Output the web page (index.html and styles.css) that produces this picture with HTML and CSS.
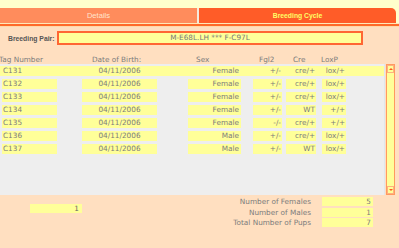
FILE: index.html
```html
<!DOCTYPE html>
<html>
<head>
<meta charset="utf-8">
<link rel="stylesheet" href="styles.css">
</head>
<body>
<div class="top"></div>
<div class="tabs">
  <div class="tab tab-details">Details</div>
  <div class="tab-gap"></div>
  <div class="tab tab-cycle">Breeding Cycle</div>
</div>
<div class="rule"></div>
<div class="panel">
  <div class="pair">
    <span class="pair-label">Breeding Pair:</span>
    <div class="pair-box">M-E68L.LH *** F-C97L</div>
  </div>
  <div class="head">
    <span class="h-tag">Tag Number</span>
    <span class="h-date">Date of Birth:</span>
    <span class="h-sex">Sex</span>
    <span class="h-fgl">Fgl2</span>
    <span class="h-cre">Cre</span>
    <span class="h-lox">LoxP</span>
  </div>
  <div class="listwrap">
    <div class="list">
      <div class="row selected"><span class="c c-tag">C131</span><span class="c c-date">04/11/2006</span><span class="c c-sex">Female</span><span class="c c-fgl">+/-</span><span class="c c-cre">cre/+</span><span class="c c-lox">lox/+</span></div>
      <div class="row"><span class="c c-tag">C132</span><span class="c c-date">04/11/2006</span><span class="c c-sex">Female</span><span class="c c-fgl">+/-</span><span class="c c-cre">cre/+</span><span class="c c-lox">lox/+</span></div>
      <div class="row"><span class="c c-tag">C133</span><span class="c c-date">04/11/2006</span><span class="c c-sex">Female</span><span class="c c-fgl">+/-</span><span class="c c-cre">cre/+</span><span class="c c-lox">lox/+</span></div>
      <div class="row"><span class="c c-tag">C134</span><span class="c c-date">04/11/2006</span><span class="c c-sex">Female</span><span class="c c-fgl">+/-</span><span class="c c-cre">WT</span><span class="c c-lox">+/+</span></div>
      <div class="row"><span class="c c-tag">C135</span><span class="c c-date">04/11/2006</span><span class="c c-sex">Female</span><span class="c c-fgl">-/-</span><span class="c c-cre">cre/+</span><span class="c c-lox">+/+</span></div>
      <div class="row"><span class="c c-tag">C136</span><span class="c c-date">04/11/2006</span><span class="c c-sex">Male</span><span class="c c-fgl">+/-</span><span class="c c-cre">cre/+</span><span class="c c-lox">lox/+</span></div>
      <div class="row"><span class="c c-tag">C137</span><span class="c c-date">04/11/2006</span><span class="c c-sex">Male</span><span class="c c-fgl">+/-</span><span class="c c-cre">WT</span><span class="c c-lox">lox/+</span></div>
    </div>
    <div class="scroll">
      <div class="sb-btn"><span class="arrow up"></span></div>
      <div class="sb-track"></div>
      <div class="sb-btn"><span class="arrow down"></span></div>
    </div>
  </div>
  <div class="summary">
    <div class="page-box">1</div>
    <div class="totals">
      <span class="t-label">Number of Females</span><span class="t-val">5</span>
      <span class="t-label">Number of Males</span><span class="t-val">1</span>
      <span class="t-label">Total Number of Pups</span><span class="t-val">7</span>
    </div>
  </div>
</div>
</body>
</html>
```

FILE: styles.css
```css
html {
  background: #ffdfc0;
}
body {
  margin: 0;
  width: 399px;
  height: 248px;
  overflow: hidden;
  font-family: "DejaVu Sans", Verdana, sans-serif;
  font-size: 7.3px;
  color: #7c7c7c;
  background: #ffdfc0;
}
.top {
  height: 8px;
  background: #ffffcc;
}
.tabs {
  display: flex;
  height: 15px;
  background: #ffffcc;
}
.tab {
  display: flex;
  align-items: center;
  justify-content: center;
  width: 197px;
  flex-shrink: 0;
}
.tab-gap {
  width: 2px;
  background: #f4eadc;
}
.tab-details {
  background: #ff8c5c;
  color: #ffe4cc;
  font-family: "Liberation Sans", Arial, sans-serif;
  font-size: 7.6px;
}
.tab-cycle {
  background: #ff5c28;
  color: #ffff66;
  font-family: "Liberation Sans", Arial, sans-serif;
  font-weight: bold;
  font-size: 6.8px;
  border-top-right-radius: 5px;
}
.rule {
  height: 2px;
  background: #ff6a2a;
  border-top: 1px solid #ffe8b8;
  border-bottom: 1px solid #ffd8a8;
}
.panel {
  background: #ffdfc0;
}
.pair {
  display: flex;
  align-items: center;
  padding-top: 4px;
}
.pair-label {
  width: 49px;
  padding-left: 8px;
  font-family: "Liberation Sans", Arial, sans-serif;
  font-weight: bold;
  font-size: 6.8px;
  color: #555555;
}
.pair-box {
  width: 306px;
  height: 14px;
  box-sizing: border-box;
  border: 2px solid #ff6633;
  background: #ffff99;
  text-align: center;
  line-height: 10px;
  color: #777777;
}
.head {
  display: flex;
  margin-top: 11px;
  height: 8px;
  line-height: 8px;
  white-space: nowrap;
}
.head span {
  flex-shrink: 0;
}
.h-tag { width: 93px; margin-left: -1px; }
.h-date { width: 104px; }
.h-sex { width: 63px; }
.h-fgl { width: 34px; }
.h-cre { width: 28px; }
.h-lox { width: 40px; }
.listwrap {
  display: flex;
  height: 131px;
}
.list {
  width: 384px;
  background: #eeeeee;
  padding-top: 2px;
  border-right: 1px solid #dfe6ee;
}
.row {
  display: flex;
  height: 10px;
  line-height: 10px;
  margin-bottom: 3px;
  white-space: nowrap;
}
.row.selected {
  background: #ffff99;
}
.c {
  background: #ffff99;
  flex-shrink: 0;
  box-sizing: border-box;
  text-align: right;
  padding-right: 1px;
}
.c-tag { margin-left: 2px; width: 55px; text-align: left; padding-left: 1px; }
.c-date { margin-left: 25px; width: 75px; text-align: center; padding-right: 0; }
.c-sex { margin-left: 31px; width: 53px; padding-right: 2px; }
.c-fgl { margin-left: 12px; width: 29px; }
.c-cre { margin-left: 4px; width: 30px; }
.c-lox { margin-left: 6px; width: 24px; }
.scroll {
  margin-left: 1px;
  width: 9px;
  box-sizing: border-box;
  border: 1px solid #ff9a60;
  background: #ffff99;
  display: flex;
  flex-direction: column;
}
.sb-btn {
  height: 8px;
  box-sizing: border-box;
  border: 1px solid #ffb080;
  display: flex;
  align-items: center;
  justify-content: center;
}
.sb-track {
  flex: 1;
}
.arrow {
  width: 0;
  height: 0;
  border-left: 2px solid transparent;
  border-right: 2px solid transparent;
}
.arrow.up {
  border-bottom: 2px solid #ff5a20;
}
.arrow.down {
  border-top: 2px solid #ff5a20;
}
.summary {
  display: flex;
  justify-content: space-between;
}
.page-box {
  margin-left: 30px;
  margin-top: 9px;
  width: 52px;
  height: 9px;
  line-height: 9px;
  background: #ffff99;
  text-align: right;
  padding-right: 3px;
  box-sizing: border-box;
  color: #666666;
}
.totals {
  margin-top: 2px;
  margin-right: 26px;
  display: grid;
  grid-template-columns: auto 51px;
  column-gap: 11px;
  row-gap: 1.5px;
}
.t-label {
  text-align: right;
  line-height: 9px;
}
.t-val {
  height: 9px;
  line-height: 9px;
  background: #ffff99;
  text-align: right;
  padding-right: 2px;
}
```
